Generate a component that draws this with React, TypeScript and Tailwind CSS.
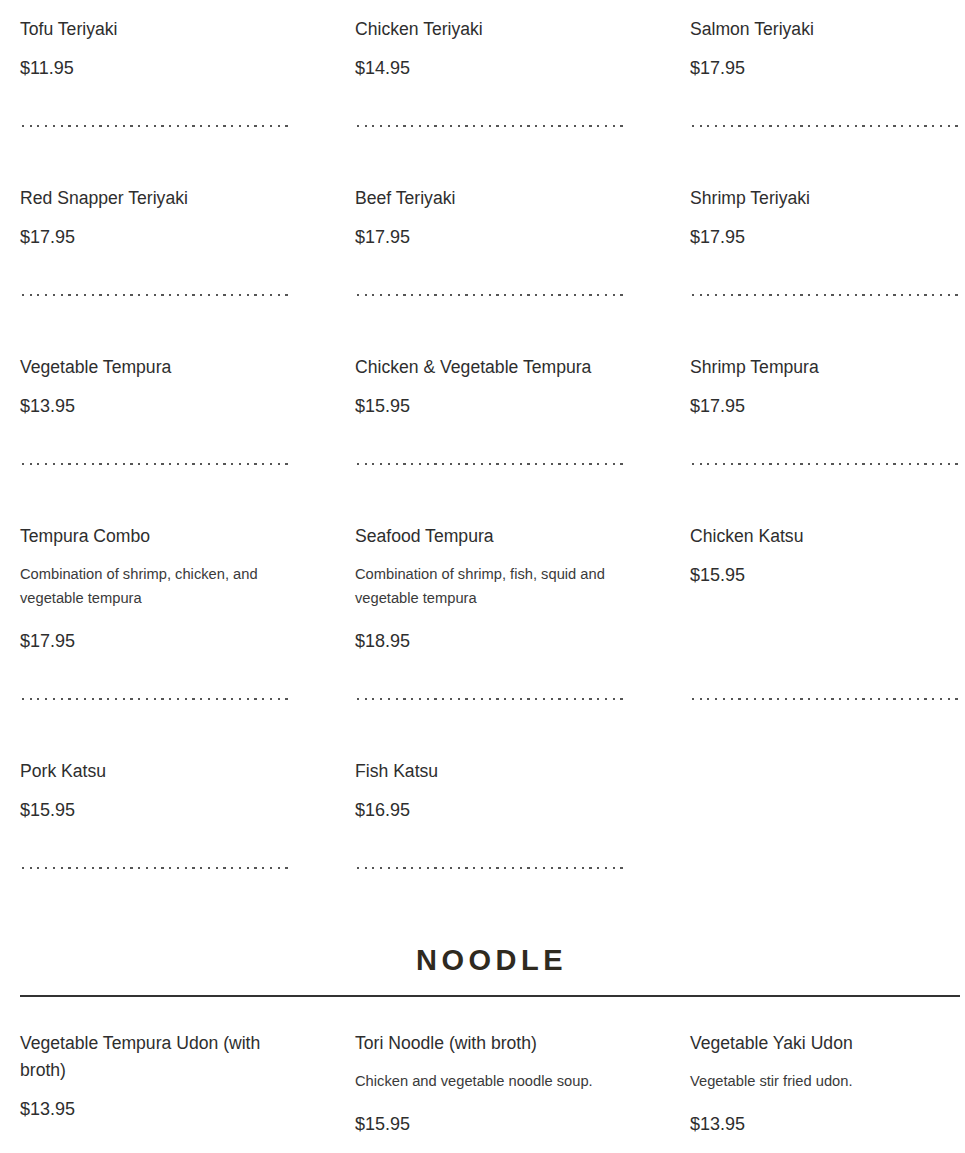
import React from 'react';

type Item = { name: string; price: string; desc?: string };

const mains: Item[] = [
  { name: 'Tofu Teriyaki', price: '$11.95' },
  { name: 'Chicken Teriyaki', price: '$14.95' },
  { name: 'Salmon Teriyaki', price: '$17.95' },
  { name: 'Red Snapper Teriyaki', price: '$17.95' },
  { name: 'Beef Teriyaki', price: '$17.95' },
  { name: 'Shrimp Teriyaki', price: '$17.95' },
  { name: 'Vegetable Tempura', price: '$13.95' },
  { name: 'Chicken & Vegetable Tempura', price: '$15.95' },
  { name: 'Shrimp Tempura', price: '$17.95' },
  { name: 'Tempura Combo', price: '$17.95', desc: 'Combination of shrimp, chicken, and vegetable tempura' },
  { name: 'Seafood Tempura', price: '$18.95', desc: 'Combination of shrimp, fish, squid and vegetable tempura' },
  { name: 'Chicken Katsu', price: '$15.95' },
  { name: 'Pork Katsu', price: '$15.95' },
  { name: 'Fish Katsu', price: '$16.95' },
];

const noodles: Item[] = [
  { name: 'Vegetable Tempura Udon (with broth)', price: '$13.95' },
  { name: 'Tori Noodle (with broth)', price: '$15.95', desc: 'Chicken and vegetable noodle soup.' },
  { name: 'Vegetable Yaki Udon', price: '$13.95', desc: 'Vegetable stir fried udon.' },
];

const MenuItem = ({ item, dots = true }: { item: Item; dots?: boolean }) => (
  <div className="flex flex-col">
    <h3 className="text-[17.6px] leading-[27px] text-[#2e2e2e] font-normal mb-3">{item.name}</h3>
    {item.desc && (
      <p className="text-[14.7px] leading-6 text-[#3a3a3a] mb-[18px]">{item.desc}</p>
    )}
    <p className="text-[18px] leading-[27px] text-[#2e2e2e]">{item.price}</p>
    {dots && (
      <div className="mt-auto pt-[43px]">
        <div className="h-[2px] w-[270px] bg-[repeating-linear-gradient(90deg,#555_0_2px,transparent_2px_7.75px)] bg-[position:2px_0]" />
      </div>
    )}
  </div>
);

export default function App() {
  return (
    <div className="bg-white min-h-screen font-['Liberation_Sans',Arial,sans-serif]">
      <div className="w-[940px] ml-5 pt-4">
        <div className="grid grid-cols-3 gap-x-[65px] gap-y-[58px]">
          {mains.map((it) => (
            <MenuItem key={it.name} item={it} />
          ))}
        </div>

        <div className="pt-[74px]">
          <h2 className="text-center font-bold text-[29px] leading-[34px] tracking-[4.5px] pl-[3px] text-[#2f2a1f] font-['Liberation_Sans',Arial,sans-serif]">
            NOODLE
          </h2>
          <div className="mt-[18px] h-[2px] bg-[#333]" />
        </div>

        <div className="grid grid-cols-3 gap-x-[65px] pt-[32.5px]">
          {noodles.map((it) => (
            <MenuItem key={it.name} item={it} dots={false} />
          ))}
        </div>
        <div className="h-10" />
      </div>
    </div>
  );
}
